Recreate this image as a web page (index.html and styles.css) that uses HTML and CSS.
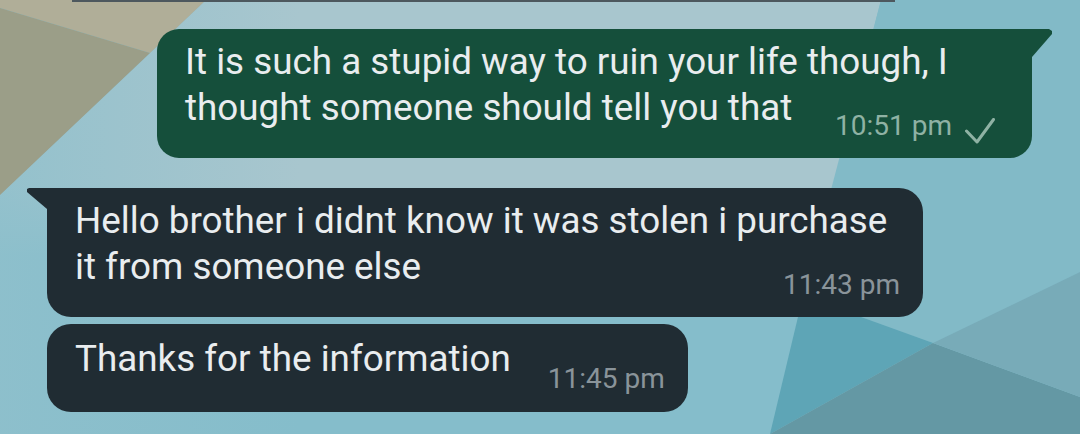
FILE: index.html
```html
<!DOCTYPE html>
<html lang="en">
<head>
<meta charset="utf-8">
<title>Chat</title>
<link rel="stylesheet" href="styles.css">
</head>
<body>
<div class="screen">
  <svg class="wallpaper" width="1080" height="434" viewBox="0 0 1080 434" aria-hidden="true">
    <defs>
      <linearGradient id="sky" gradientUnits="userSpaceOnUse" x1="0" y1="185" x2="0" y2="255">
        <stop offset="0" stop-color="#a8c6ce"/>
        <stop offset="1" stop-color="#85bdcb"/>
      </linearGradient>
      <linearGradient id="side" gradientUnits="userSpaceOnUse" x1="0" y1="0" x2="300" y2="0">
        <stop offset="0" stop-color="#8fc0cc" stop-opacity="0.8"/>
        <stop offset="1" stop-color="#8fc0cc" stop-opacity="0"/>
      </linearGradient>
    </defs>
    <rect width="1080" height="434" fill="#84bcca"/>
    <polygon points="206,0 881,0 770,434 0,434 0,195" fill="url(#sky)"/>
    <polygon points="206,0 300,0 300,434 0,434 0,195" fill="url(#side)"/>
    <polygon points="0,0 206,0 150,53 0,8" fill="#b0ae98"/>
    <polygon points="0,8 150,53 0,195" fill="#9b9e88"/>
    <polygon points="881,0 1080,0 1080,272 933,343 803,296" fill="#82bac7"/>
    <polygon points="803,296 933,343 770,434" fill="#5ea5b6"/>
    <polygon points="933,343 1080,397 1080,434 770,434" fill="#6498a4"/>
    <polygon points="933,343 1080,272 1080,397" fill="#78abb8"/>
  </svg>

  <div class="chat">
    <div class="prev"></div>

    <div class="bubble out">
      <p class="text">It is such a stupid way to ruin your life though, I thought someone should tell you that</p>
      <div class="meta">
        <span class="time">10:51 pm</span>
        <svg class="tick" width="30" height="26" viewBox="0 0 30 26" aria-hidden="true">
          <path d="M1.5 13 L12 24 L28.5 1.5" fill="none" stroke="#8fb2a4" stroke-width="3" stroke-linecap="round" stroke-linejoin="round"/>
        </svg>
      </div>
    </div>

    <div class="bubble in first">
      <p class="text">Hello brother i didnt know it was stolen i purchase it from someone else</p>
      <div class="meta">
        <span class="time">11:43 pm</span>
      </div>
    </div>

    <div class="bubble in short">
      <p class="text">Thanks for the information</p>
      <div class="meta">
        <span class="time">11:45 pm</span>
      </div>
    </div>
  </div>
</div>
</body>
</html>
```

FILE: styles.css
```css
body {
  margin: 0;
}

.screen {
  position: relative;
  width: 1080px;
  height: 434px;
  overflow: hidden;
  background: #84bcca;
  font-family: Roboto, "Noto Sans", sans-serif;
}

.wallpaper {
  position: absolute;
  top: 0;
  left: 0;
}

.chat {
  position: relative;
  display: flex;
  flex-direction: column;
  align-items: flex-start;
}

.prev {
  height: 2px;
  width: 823px;
  margin-left: 72px;
  background: #4d585e;
}

.bubble {
  position: relative;
  box-sizing: border-box;
}

.text {
  margin: 0;
  font-size: 36.8px;
  line-height: 46px;
  color: #e9edef;
}

.meta {
  display: flex;
  justify-content: flex-end;
  align-items: flex-end;
  height: 32px;
  margin-top: -21px;
}

.time {
  font-size: 28px;
  line-height: 32px;
  white-space: nowrap;
}

.out {
  margin: 27px 0 0 157px;
  width: 875px;
  padding: 10px 23px 16px 28px;
  background: #154f3b;
  border-radius: 22px 0 22px 22px;
}

.out::after {
  content: "";
  position: absolute;
  top: 0;
  left: 100%;
  width: 20px;
  height: 28px;
  background: inherit;
  clip-path: polygon(0 0, 17px 0, 20px 2px, 20px 5px, 0 100%);
}

.out .time {
  color: #8fb2a4;
}

.tick {
  margin: 0 14px -2px 13px;
}

.in {
  margin-left: 47px;
  background: #202c33;
}

.in .time {
  color: #8a949a;
}

.first {
  margin-top: 30px;
  width: 876px;
  padding: 10px 23px 16px 28px;
  border-radius: 0 24px 24px 24px;
}

.first .text {
  max-width: 822px;
}

.first::before {
  content: "";
  position: absolute;
  top: 0;
  right: 100%;
  width: 20px;
  height: 21px;
  background: inherit;
  clip-path: polygon(2px 0, 100% 0, 100% 100%, 0 4px, 0 1px);
}

.short {
  margin-top: 7px;
  display: flex;
  align-items: flex-start;
  gap: 37px;
  padding: 12px 23px 17px 28px;
  border-radius: 24px;
}

.short .meta {
  margin-top: 27px;
}
```
